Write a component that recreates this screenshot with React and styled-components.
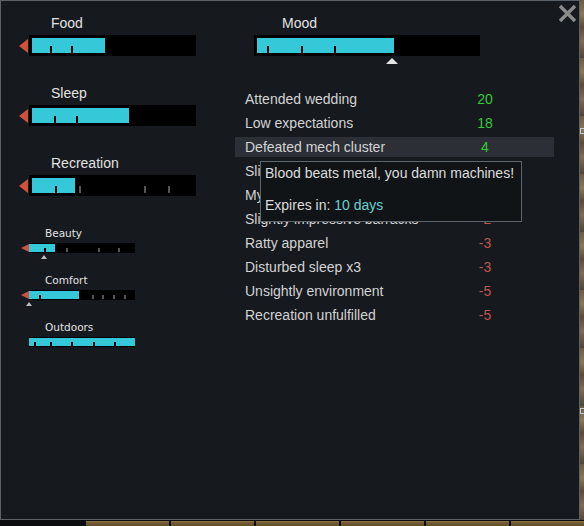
import styled, { createGlobalStyle } from "styled-components";

const GlobalStyle = createGlobalStyle`
  html, body {
    margin: 0;
    padding: 0;
    background: #0d0e10;
    overflow: hidden;
  }
  body {
    font-family: "Liberation Sans", Arial, sans-serif;
  }
`;

// outer frame: the window plus a sliver of the game behind it
const Screen = styled.div`
  display: grid;
  grid-template-columns: 580px 4px;
  grid-template-rows: 520px 6px;
  width: 584px;
  height: 526px;
`;

const Panel = styled.div`
  grid-column: 1;
  grid-row: 1;
  box-sizing: border-box;
  border: 1px solid #5a6169;
  background: #16191e;
  display: flex;
  align-items: flex-start;
  padding: 3px 0 0 18px;
  overflow: hidden;
`;

const GameEdge = styled.div`
  grid-column: 2;
  grid-row: 1;
  display: flex;
  flex-direction: column;
  padding-top: 128px;
  gap: 274px;
  background: repeating-linear-gradient(
    180deg,
    #6b5a43 0px,
    #8a7757 14px,
    #5a4b38 27px,
    #7d6c55 41px,
    #4f4437 58px
  );
`;

const EdgeMark = styled.div`
  width: 4px;
  height: 6px;
  border: 1px solid #c8c8c8;
  border-right: none;
  box-sizing: border-box;
`;

const BottomBar = styled.div`
  grid-column: 1 / span 2;
  grid-row: 2;
  display: flex;
  gap: 2px;
  padding-left: 86px;
  background: #0c0d0f;
  overflow: hidden;
`;

const TabButton = styled.div`
  flex: 0 0 83px;
  margin-top: 1px;
  background: linear-gradient(180deg, #94794a 0px, #6f5932 2px, #65502c 100%);
`;

// ---- needs column ----

const NeedsColumn = styled.div`
  width: 177px;
  flex-shrink: 0;
  margin-top: 11px;
  display: flex;
  flex-direction: column;
`;

const NeedBlock = styled.div`
  display: flex;
  flex-direction: column;
  gap: 4px;
  margin-bottom: ${(p) => p.$gap}px;
`;

const NeedLabel = styled.div`
  margin-left: ${(p) => (p.$small ? 26 : 32)}px;
  color: #e2e2e2;
  font-size: ${(p) => (p.$small ? "10.5px" : "14px")};
  line-height: ${(p) => (p.$small ? "12px" : "16px")};
  font-family: ${(p) =>
    p.$small ? `"DejaVu Sans", Verdana, sans-serif` : `"Liberation Sans", Arial, sans-serif`};
  white-space: nowrap;
`;

const BarLine = styled.div`
  display: flex;
  align-items: center;
`;

const ArrowSlot = styled.div`
  width: 10px;
  display: flex;
  justify-content: flex-end;
  padding-right: ${(p) => (p.$small ? 0 : 1)}px;
  box-sizing: border-box;
`;

const Arrow = styled.div`
  width: 0;
  height: 0;
  border-top: ${(p) => (p.$small ? 4 : 7.5)}px solid transparent;
  border-bottom: ${(p) => (p.$small ? 4 : 7.5)}px solid transparent;
  border-right: ${(p) => (p.$small ? 8 : 9)}px solid #cf5241;
`;

const Track = styled.div`
  position: relative;
  box-sizing: border-box;
  width: ${(p) => p.$w}px;
  height: ${(p) => (p.$small ? 10 : 21)}px;
  padding: ${(p) => (p.$small ? "1px 0" : "3px")};
  background: #000;
`;

const TrackInner = styled.div`
  position: relative;
  height: 100%;
`;

const Fill = styled.div`
  height: 100%;
  background: #34c8d8;
`;

const Tick = styled.div`
  position: absolute;
  bottom: 0;
  width: 2px;
  height: ${(p) => (p.$small ? 4 : 7)}px;
  background: ${(p) => (p.$on ? "#000" : "#555")};
`;

const Marker = styled.div`
  position: absolute;
  top: calc(100% + ${(p) => (p.$small ? 3 : 5)}px);
  width: 0;
  height: 0;
  transform: translateX(-50%);
  border-left: ${(p) => (p.$small ? 3 : 6)}px solid transparent;
  border-right: ${(p) => (p.$small ? 3 : 6)}px solid transparent;
  border-bottom: ${(p) => (p.$small ? 4 : 6)}px solid ${(p) => (p.$small ? "#bdbdbd" : "#e4e4e4")};
`;

function Bar({ width, fill, ticks, marker, small }) {
  return (
    <Track $w={width} $small={small}>
      <TrackInner>
        <Fill style={{ width: fill }} />
        {ticks.map((t) => (
          <Tick key={t} $small={small} $on={t < fill} style={{ left: t }} />
        ))}
        {marker !== undefined && <Marker $small={small} style={{ left: marker }} />}
      </TrackInner>
    </Track>
  );
}

function Need({ label, fill, ticks, arrow, marker, small, gap }) {
  return (
    <NeedBlock $gap={gap}>
      <NeedLabel $small={small}>{label}</NeedLabel>
      <BarLine>
        <ArrowSlot $small={small}>{arrow && <Arrow $small={small} />}</ArrowSlot>
        <Bar width={small ? 106 : 167} fill={fill} ticks={ticks} marker={marker} small={small} />
      </BarLine>
    </NeedBlock>
  );
}

// ---- mood column ----

const MoodColumn = styled.div`
  width: 319px;
  flex-shrink: 0;
  margin: 11px 0 0 39px;
  display: flex;
  flex-direction: column;
`;

const MoodHeader = styled.div`
  display: flex;
  flex-direction: column;
  gap: 4px;
  margin-left: 19px;
`;

const MoodLabel = styled(NeedLabel)`
  margin-left: 28px;
`;

const ThoughtList = styled.div`
  position: relative;
  margin-top: 33px;
  display: flex;
  flex-direction: column;
  gap: 4px;
`;

const ThoughtRow = styled.div`
  display: grid;
  grid-template-columns: 220px 40px;
  padding-left: 10px;
  height: 20px;
  line-height: 20px;
  font-size: 14px;
  color: #d3d3d3;
  white-space: nowrap;
  background: ${(p) => (p.$active ? "#2c3036" : "transparent")};
`;

const ThoughtValue = styled.span`
  text-align: center;
  color: ${(p) => (p.$value > 0 ? "#35c935" : "#bf5553")};
`;

const Tooltip = styled.div`
  position: absolute;
  top: 72px;
  left: 25px;
  width: 262px;
  height: 61px;
  box-sizing: border-box;
  padding: 3px 4px;
  border: 1px solid #5c666b;
  background: #111417;
  color: #dcdcdc;
  font-size: 14px;
  line-height: 16px;
  white-space: nowrap;
`;

const TooltipLine = styled.div`
  margin-top: ${(p) => (p.$spaced ? 16 : 0)}px;
`;

const Highlight = styled.span`
  color: #6ccfd0;
`;

const CloseButton = styled.button`
  flex-shrink: 0;
  margin-left: 4px;
  width: 19px;
  height: 19px;
  padding: 0;
  border: none;
  background: none;
  cursor: pointer;
  display: block;
`;

const thoughts = [
  { text: "Attended wedding", value: 20 },
  { text: "Low expectations", value: 18 },
  { text: "Defeated mech cluster", value: 4, active: true },
  { text: "Slightly impressive dining room", value: 2 },
  { text: "My room is cramped", value: -2 },
  { text: "Slightly impressive barracks", value: -2 },
  { text: "Ratty apparel", value: -3 },
  { text: "Disturbed sleep x3", value: -3 },
  { text: "Unsightly environment", value: -5 },
  { text: "Recreation unfulfilled", value: -5 },
];

export default function App() {
  return (
    <>
      <GlobalStyle />
      <Screen>
        <Panel>
          <NeedsColumn>
            <Need label="Food" fill={73} ticks={[18, 39]} arrow gap={29} />
            <Need label="Sleep" fill={97} ticks={[22, 44]} arrow gap={29} />
            <Need label="Recreation" fill={43} ticks={[23, 47, 112, 136]} arrow gap={31} />
            <Need label="Beauty" fill={26} ticks={[15, 37, 69, 89]} arrow marker={15} small gap={21} />
            <Need label="Comfort" fill={50} ticks={[10, 63, 73, 84, 95]} arrow marker={0} small gap={21} />
            <Need label="Outdoors" fill={106} ticks={[5, 21, 42, 64, 85]} small gap={0} />
          </NeedsColumn>

          <MoodColumn>
            <MoodHeader>
              <MoodLabel>Mood</MoodLabel>
              <Bar width={226} fill={137} ticks={[10, 44, 77]} marker={135} />
            </MoodHeader>

            <ThoughtList>
              {thoughts.map((t) => (
                <ThoughtRow key={t.text} $active={t.active}>
                  <span>{t.text}</span>
                  <ThoughtValue $value={t.value}>{t.value}</ThoughtValue>
                </ThoughtRow>
              ))}
              <Tooltip>
                <TooltipLine>Blood beats metal, you damn machines!</TooltipLine>
                <TooltipLine $spaced>
                  Expires in: <Highlight>10 days</Highlight>
                </TooltipLine>
              </Tooltip>
            </ThoughtList>
          </MoodColumn>

          <CloseButton aria-label="Close">
            <svg width="19" height="19" viewBox="0 0 19 19">
              <path d="M2 2 L17 17 M17 2 L2 17" stroke="#8b8b8b" strokeWidth="3.4" />
            </svg>
          </CloseButton>
        </Panel>

        <GameEdge>
          <EdgeMark />
          <EdgeMark />
        </GameEdge>

        <BottomBar>
          {[0, 1, 2, 3, 4, 5].map((i) => (
            <TabButton key={i} />
          ))}
        </BottomBar>
      </Screen>
    </>
  );
}
